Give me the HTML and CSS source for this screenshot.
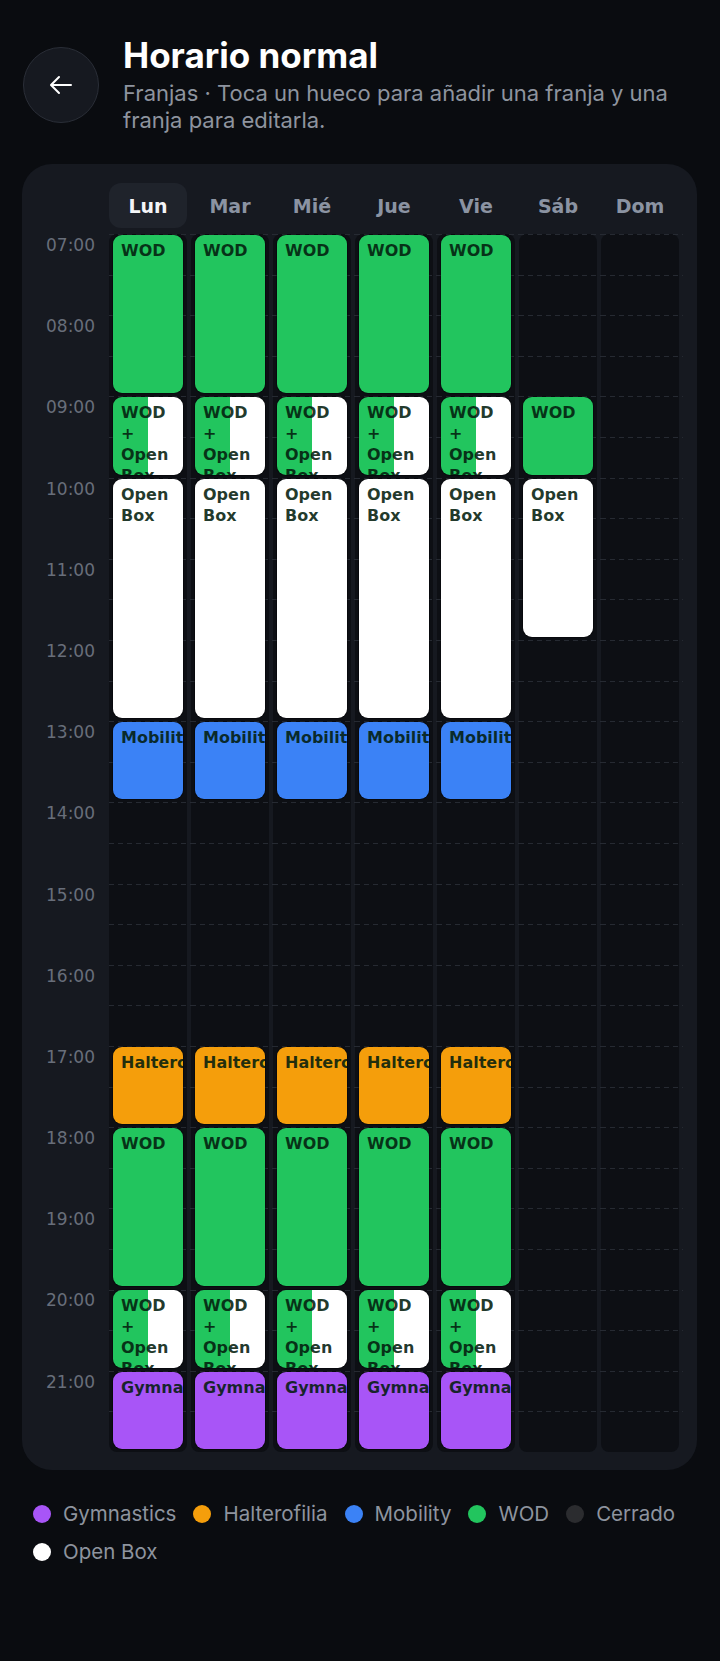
FILE: index.html
```html
<!DOCTYPE html>
<html lang="es">
<head>
  <meta charset="UTF-8">
  <meta name="viewport" content="width=device-width, initial-scale=1">
  <title>Horario normal</title>
  <link rel="stylesheet" href="styles.css">
</head>
<body>

  <header class="top">
    <button class="back-btn" aria-label="Volver">
      <svg width="24" height="20" viewBox="0 0 24 20" fill="none" stroke="#fff" stroke-width="2" stroke-linecap="round" stroke-linejoin="round">
        <path d="M22 10H3"/>
        <path d="M10 2L2 10l8 8"/>
      </svg>
    </button>
    <div class="titles">
      <h1>Horario normal</h1>
      <p>Franjas · Toca un hueco para añadir una franja y una franja para editarla.</p>
    </div>
  </header>

  <section class="card">
    <div class="days-head">
      <span></span>
      <div class="day active">Lun</div>
      <div class="day">Mar</div>
      <div class="day">Mié</div>
      <div class="day">Jue</div>
      <div class="day">Vie</div>
      <div class="day">Sáb</div>
      <div class="day">Dom</div>
    </div>

    <div class="grid" id="grid">
      <div class="hours" id="hours"></div>
    </div>
  </section>

  <div class="legend">
    <span class="item"><i class="dot gym"></i>Gymnastics</span>
    <span class="item"><i class="dot halt"></i>Halterofilia</span>
    <span class="item"><i class="dot mob"></i>Mobility</span>
    <span class="item"><i class="dot wod"></i>WOD</span>
    <span class="item"><i class="dot closed"></i>Cerrado</span>
    <span class="item"><i class="dot open"></i>Open Box</span>
  </div>

  <script>
    // franjas de lunes a viernes (hora inicio, hora fin, tipo, texto)
    const semana = [
      [7, 9, "wod", "WOD"],
      [9, 10, "mix", "WOD + Open Box"],
      [10, 13, "open", "Open Box"],
      [13, 14, "mob", "Mobility"],
      [17, 18, "halt", "Halterofilia"],
      [18, 20, "wod", "WOD"],
      [20, 21, "mix", "WOD + Open Box"],
      [21, 22, "gym", "Gymnastics"]
    ];
    const sabado = [
      [9, 10, "wod", "WOD"],
      [10, 12, "open", "Open Box"]
    ];
    const dias = [semana, semana, semana, semana, semana, sabado, []];

    const horas = document.getElementById("hours");
    for (let h = 7; h < 22; h++) {
      const lbl = document.createElement("div");
      lbl.className = "hour";
      lbl.textContent = String(h).padStart(2, "0") + ":00";
      horas.appendChild(lbl);
    }

    const grid = document.getElementById("grid");
    dias.forEach(franjas => {
      const col = document.createElement("div");
      col.className = "day-col";
      franjas.forEach(f => {
        const b = document.createElement("div");
        b.className = "slot " + f[2];
        b.style.gridRow = (f[0] - 6) + " / " + (f[1] - 6);
        b.textContent = f[3];
        col.appendChild(b);
      });
      grid.appendChild(col);
    });
  </script>

</body>
</html>
```

FILE: styles.css
```css
html {
  background: #0a0c10;
}

body {
  margin: 0;
  min-height: 1661px;
  background: #0a0c10;
  color: #f3f4f6;
  font-family: 'Inter', 'Noto Sans', sans-serif;
}

.top {
  display: flex;
  align-items: flex-start;
  gap: 24px;
  padding: 35px 22px 30px 23px;
}

.back-btn {
  flex: none;
  width: 76px;
  height: 76px;
  margin-top: 12px;
  border-radius: 50%;
  border: 1px solid #2a2e37;
  background: #161920;
  display: flex;
  align-items: center;
  justify-content: center;
  padding: 0;
  cursor: pointer;
}

.titles h1 {
  margin: 0;
  font-size: 35px;
  line-height: 40px;
  font-weight: 700;
  color: #fff;
}

.titles p {
  margin: 5px 0 0;
  font-size: 22px;
  line-height: 27px;
  color: #8e949f;
}

.card {
  margin: 0 23px 0 22px;
  padding: 19px 18px 18px 0;
  background: #161920;
  border-radius: 30px;
}

.days-head,
.grid {
  display: grid;
  grid-template-columns: 83px repeat(7, 78px);
  column-gap: 4px;
}

.days-head {
  margin-bottom: 6px;
}

.day {
  height: 45px;
  display: flex;
  align-items: center;
  justify-content: center;
  border-radius: 12px;
  font-family: 'DejaVu Sans', sans-serif;
  font-weight: 700;
  font-size: 19px;
  color: #8b93a2;
}

.day.active {
  background: #1f232b;
  color: #f4f5f7;
}

.hours {
  display: grid;
  grid-template-rows: repeat(15, 81.2px);
}

.hour {
  text-align: right;
  padding: 1px 10px 0 0;
  font-family: 'DejaVu Sans', sans-serif;
  font-size: 17px;
  line-height: 20px;
  color: #686e7a;
}

.day-col {
  position: relative;
  display: grid;
  grid-template-rows: repeat(15, 81.2px);
  background: #0d0f14;
  border-radius: 8px;
}

/* lineas punteadas cada media hora */
.day-col::before {
  content: "";
  position: absolute;
  inset: 0 -4px 0 0;
  background: repeating-linear-gradient(to bottom, #262a32 0 1px, transparent 1px 40.6px);
  -webkit-mask-image: repeating-linear-gradient(to right, #000 0 5px, transparent 5px 9px);
  mask-image: repeating-linear-gradient(to right, #000 0 5px, transparent 5px 9px);
}

.slot {
  position: relative;
  z-index: 1;
  margin: 1px 4px 3px;
  padding: 5px 8px;
  border-radius: 9px;
  overflow: hidden;
  font-family: 'DejaVu Sans', sans-serif;
  font-weight: 700;
  font-size: 16px;
  line-height: 21px;
  color: rgba(4, 30, 14, 0.88);
  box-shadow: 0 0 0 1px rgba(0, 0, 0, 0.35);
}

.slot.wod { background: #22c55e; }
.slot.open { background: #ffffff; }
.slot.mob { background: #3b82f6; }
.slot.halt { background: #f59e0b; }
.slot.gym { background: #a855f7; }
.slot.mix { background: linear-gradient(to right, #22c55e 50%, #ffffff 50%); }

.legend {
  display: flex;
  flex-wrap: wrap;
  column-gap: 17px;
  row-gap: 14px;
  padding: 32px 22px 0 33px;
}

.legend .item {
  display: flex;
  align-items: center;
  gap: 12px;
  font-size: 20.5px;
  line-height: 24px;
  color: #8e949f;
}

.dot {
  width: 18px;
  height: 18px;
  border-radius: 50%;
}

.dot.gym { background: #a855f7; }
.dot.halt { background: #f59e0b; }
.dot.mob { background: #3b82f6; }
.dot.wod { background: #22c55e; }
.dot.closed { background: #2b2c2f; }
.dot.open { background: #ffffff; }
```
